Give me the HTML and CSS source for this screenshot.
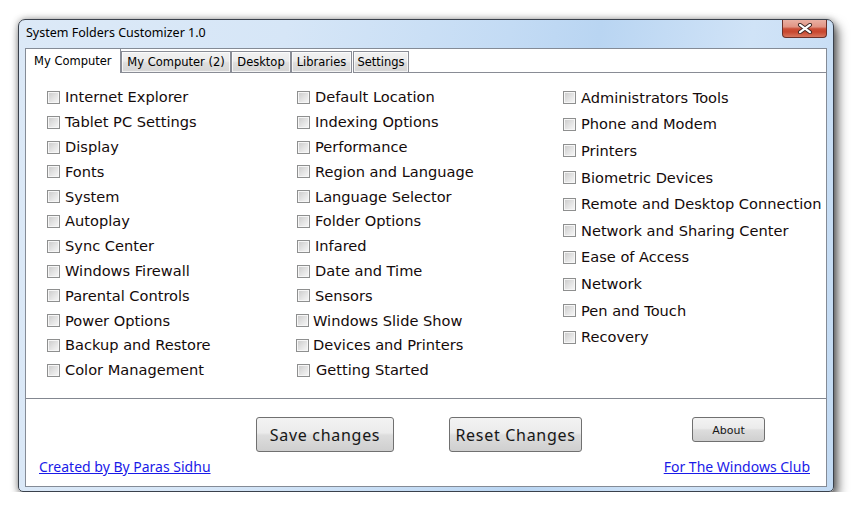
FILE: index.html
```html
<!DOCTYPE html>
<html>
<head>
<meta charset="utf-8">
<link rel="stylesheet" href="styles.css">
</head>
<body>
<div class="window">
  <div class="titlebar">
    <span class="title">System Folders Customizer 1.0</span>
    <button class="close" aria-label="Close">
      <svg width="16" height="11" viewBox="0 0 16 11">
        <path d="M3 1.8 L13 9.2 M13 1.8 L3 9.2" stroke="#3d2724" stroke-width="4" stroke-linecap="round" fill="none"/>
        <path d="M3 1.8 L13 9.2 M13 1.8 L3 9.2" stroke="#ffffff" stroke-width="2.2" stroke-linecap="round" fill="none"/>
      </svg>
    </button>
  </div>
  <div class="client">
    <div class="tabs">
      <div class="tab active">My Computer</div>
      <div class="tab t2">My Computer (2)</div>
      <div class="tab t3">Desktop</div>
      <div class="tab t4">Libraries</div>
      <div class="tab t5">Settings</div>
      <div class="tab-fill"></div>
    </div>
    <div class="panel">
      <div class="col c1">
        <label class="item"><span class="cb"></span>Internet Explorer</label>
        <label class="item"><span class="cb"></span>Tablet PC Settings</label>
        <label class="item"><span class="cb"></span>Display</label>
        <label class="item"><span class="cb"></span>Fonts</label>
        <label class="item"><span class="cb"></span>System</label>
        <label class="item"><span class="cb"></span>Autoplay</label>
        <label class="item"><span class="cb"></span>Sync Center</label>
        <label class="item"><span class="cb"></span>Windows Firewall</label>
        <label class="item"><span class="cb"></span>Parental Controls</label>
        <label class="item"><span class="cb"></span>Power Options</label>
        <label class="item"><span class="cb"></span>Backup and Restore</label>
        <label class="item"><span class="cb"></span>Color Management</label>
      </div>
      <div class="col c2">
        <label class="item"><span class="cb"></span>Default Location</label>
        <label class="item"><span class="cb"></span>Indexing Options</label>
        <label class="item"><span class="cb"></span>Performance</label>
        <label class="item"><span class="cb"></span>Region and Language</label>
        <label class="item"><span class="cb"></span>Language Selector</label>
        <label class="item"><span class="cb"></span>Folder Options</label>
        <label class="item"><span class="cb"></span>Infared</label>
        <label class="item"><span class="cb"></span>Date and Time</label>
        <label class="item"><span class="cb"></span>Sensors</label>
        <label class="item shifted"><span class="cb"></span>Windows Slide Show</label>
        <label class="item shifted"><span class="cb"></span>Devices and Printers</label>
        <label class="item shifted2"><span class="cb"></span>Getting Started</label>
      </div>
      <div class="col c3">
        <label class="item"><span class="cb"></span>Administrators Tools</label>
        <label class="item"><span class="cb"></span>Phone and Modem</label>
        <label class="item"><span class="cb"></span>Printers</label>
        <label class="item"><span class="cb"></span>Biometric Devices</label>
        <label class="item"><span class="cb"></span>Remote and Desktop Connection</label>
        <label class="item"><span class="cb"></span>Network and Sharing Center</label>
        <label class="item"><span class="cb"></span>Ease of Access</label>
        <label class="item"><span class="cb"></span>Network</label>
        <label class="item"><span class="cb"></span>Pen and Touch</label>
        <label class="item"><span class="cb"></span>Recovery</label>
      </div>
    </div>
    <div class="footer">
      <div class="btnrow">
        <button class="btn save">Save changes</button>
        <button class="btn reset">Reset Changes</button>
        <button class="btn about">About</button>
      </div>
      <div class="linkrow">
        <a href="#" class="link">Created by By Paras Sidhu</a>
        <a href="#" class="link">For The Windows Club</a>
      </div>
    </div>
  </div>
</div>
</body>
</html>
```

FILE: styles.css
```css
html, body {
  margin: 0;
  background: #ffffff;
}

body {
  padding: 19px 0 0 18px;
}

.window {
  width: 816px;
  height: 473px;
  box-sizing: border-box;
  border: 1px solid #3a414c;
  border-radius: 7px 7px 5px 5px;
  padding: 0 6px 4px 6px;
  display: flex;
  flex-direction: column;
  background: linear-gradient(100deg, #dce9f7 0%, #d6e6f7 30%, #c3dbf4 55%, #b9d5f2 65%, #d0e3f7 82%, #c2daf3 100%);
  box-shadow: 0 0 7px rgba(0, 0, 0, 0.35), 4px 6px 11px rgba(0, 0, 0, 0.6);
}

.titlebar {
  height: 28px;
  flex: none;
  display: flex;
  justify-content: space-between;
  align-items: flex-start;
}

.title {
  font-family: "Noto Sans", sans-serif;
  font-size: 12.5px;
  line-height: 16px;
  color: #000;
  padding-left: 1px;
  margin-top: 5px;
}

.close {
  width: 45px;
  height: 18px;
  box-sizing: border-box;
  border: 1px solid #6a3029;
  border-top: none;
  border-radius: 0 0 4px 4px;
  background: linear-gradient(180deg, #eab0a3 0%, #e19484 40%, #cb4e37 52%, #c8472f 70%, #d8765e 100%);
  padding: 0;
  display: flex;
  align-items: center;
  justify-content: center;
}

.close svg {
  display: block;
}

.client {
  height: 439px;
  box-sizing: border-box;
  border: 1px solid #848b96;
  background: #ffffff;
  display: flex;
  flex-direction: column;
}

/* tabs */
.tabs {
  height: 24px;
  flex: none;
  display: flex;
  align-items: flex-end;
  font-family: "DejaVu Sans", sans-serif;
  font-size: 11.5px;
  color: #000;
}

.tab {
  box-sizing: border-box;
  height: 22px;
  border: 1px solid #898c95;
  background: linear-gradient(180deg, #f2f2f2 0%, #ebebeb 45%, #dddddd 55%, #d6d6d6 100%);
  box-shadow: inset 0 0 0 1px rgba(255, 255, 255, 0.7);
  display: flex;
  align-items: center;
  justify-content: center;
  white-space: nowrap;
}

.tab.active {
  width: 95px;
  height: 24px;
  border: none;
  border-right: 1px solid #898c95;
  background: #ffffff;
  box-shadow: none;
  justify-content: flex-start;
  padding-left: 8px;
  padding-bottom: 1px;
}

.t2 { width: 110px; }
.t3 { width: 60px; }
.t4 { width: 61px; }
.t5 { width: 56px; margin-left: 1px; }

.tab-fill {
  flex: 1;
  height: 1px;
  background: #898c95;
}

/* panel */
.panel {
  height: 326px;
  flex: none;
  box-sizing: border-box;
  border-bottom: 1px solid #838790;
  display: flex;
  padding-left: 21px;
}

.col {
  display: flex;
  flex-direction: column;
}

.c1 { width: 250px; padding-top: 11.6px; }
.c2 { width: 266px; padding-top: 11.6px; }
.c3 { flex: 1; padding-top: 10.8px; }

.item {
  display: flex;
  align-items: center;
  gap: 5px;
  font-family: "DejaVu Sans", sans-serif;
  font-size: 14.6px;
  color: #140a0a;
  white-space: nowrap;
}

.c1 .item, .c2 .item { height: 24.8px; }
.c3 .item { height: 26.65px; }

.item.shifted {
  margin-left: -1px;
  gap: 4px;
}

.item.shifted2 {
  gap: 6px;
}

.cb {
  width: 13px;
  height: 13px;
  flex: none;
  box-sizing: border-box;
  border: 1px solid #8e8f8f;
  background: linear-gradient(135deg, #c9c9c9 0%, #e2e2e2 50%, #f8f8f8 100%);
  box-shadow: inset 0 0 0 1px #f6f6f6;
  margin-top: 1px;
}

/* footer */
.footer {
  flex: 1;
  display: flex;
  flex-direction: column;
  padding-top: 18px;
}

.btnrow {
  display: flex;
  align-items: flex-start;
  height: 35px;
  padding-left: 230px;
}

.btn {
  box-sizing: border-box;
  border: 1px solid #707070;
  border-radius: 3px;
  background: linear-gradient(180deg, #f3f3f3 0%, #ebebeb 45%, #dddddd 52%, #cfcfcf 100%);
  color: #171717;
  padding: 0;
  display: flex;
  align-items: center;
  justify-content: center;
}

.save, .reset {
  height: 35px;
  font-family: "Noto Sans", sans-serif;
  font-size: 16px;
  letter-spacing: 0.7px;
}

.save { width: 138px; }
.reset { width: 133px; margin-left: 55px; }

.about {
  width: 73px;
  height: 25px;
  margin-left: 110px;
  font-family: "DejaVu Sans", sans-serif;
  font-size: 11px;
  padding-top: 1px;
}

.linkrow {
  margin-top: 5px;
  height: 20px;
  display: flex;
  justify-content: space-between;
  padding: 0 16px 0 13px;
}

.link {
  font-family: "Noto Sans", sans-serif;
  font-size: 14px;
  line-height: 20px;
  color: #1a1ae8;
  text-decoration: underline;
}
```
